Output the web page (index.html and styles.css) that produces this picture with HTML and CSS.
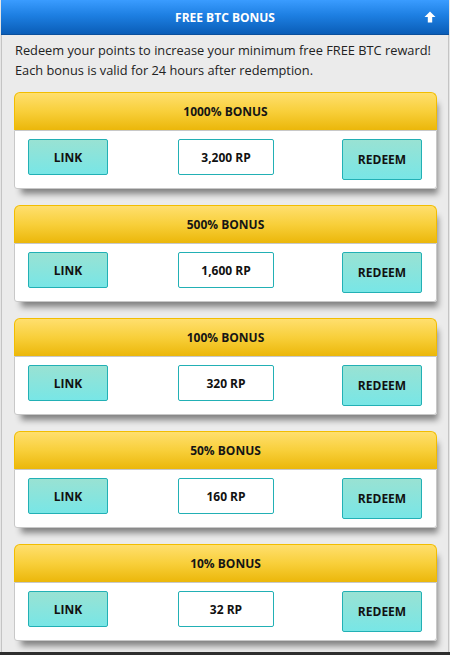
FILE: index.html
```html
<!DOCTYPE html>
<html>
<head>
<meta charset="utf-8">
<link rel="stylesheet" href="styles.css">
</head>
<body>
<div class="panel">
  <div class="panel-head">
    <span class="title">FREE BTC BONUS</span>
    <svg class="arrow" width="12" height="12" viewBox="0 0 12 12"><path d="M6 0.5 L11.5 6 L8.2 6 L8.2 11.5 L3.8 11.5 L3.8 6 L0.5 6 Z" fill="#fff"/></svg>
  </div>
  <div class="panel-body">
    <p class="intro">Redeem your points to increase your minimum free FREE BTC reward!<br>Each bonus is valid for 24 hours after redemption.</p>
    <div class="cards">
      <div class="card">
        <div class="card-head">1000% BONUS</div>
        <div class="card-body">
          <div class="btn">LINK</div>
          <div class="rp">3,200 RP</div>
          <div class="btn tall">REDEEM</div>
        </div>
      </div>
      <div class="card">
        <div class="card-head">500% BONUS</div>
        <div class="card-body">
          <div class="btn">LINK</div>
          <div class="rp">1,600 RP</div>
          <div class="btn tall">REDEEM</div>
        </div>
      </div>
      <div class="card">
        <div class="card-head">100% BONUS</div>
        <div class="card-body">
          <div class="btn">LINK</div>
          <div class="rp">320 RP</div>
          <div class="btn tall">REDEEM</div>
        </div>
      </div>
      <div class="card">
        <div class="card-head">50% BONUS</div>
        <div class="card-body">
          <div class="btn">LINK</div>
          <div class="rp">160 RP</div>
          <div class="btn tall">REDEEM</div>
        </div>
      </div>
      <div class="card">
        <div class="card-head">10% BONUS</div>
        <div class="card-body">
          <div class="btn">LINK</div>
          <div class="rp">32 RP</div>
          <div class="btn tall">REDEEM</div>
        </div>
      </div>
    </div>
  </div>
</div>
<div class="bottom-bar"></div>
</body>
</html>
```
FILE: styles.css
```css
html, body {
  margin: 0;
  padding: 0;
}
body {
  width: 450px;
  height: 655px;
  overflow: hidden;
  background: #e6e6e6;
  font-family: "Open Sans", "DejaVu Sans", sans-serif;
  display: flex;
  flex-direction: column;
}
.panel {
  width: 446px;
  height: 652px;
  margin-left: 1px;
  border-left: 1px solid #c4c4c4;
  border-right: 1px solid #c4c4c4;
  background: #ebebeb;
  display: flex;
  flex-direction: column;
  box-sizing: content-box;
}
.panel-head {
  height: 34px;
  margin: 0 -1px;
  background: linear-gradient(to bottom, #3a9cff 0%, #1d7fe2 45%, #0a5db7 100%);
  border-bottom: 1px solid #0a4f9c;
  display: flex;
  align-items: center;
  justify-content: center;
  position: relative;
}
.title {
  color: #fff;
  font-weight: 700;
  font-size: 12px;
}
.arrow {
  position: absolute;
  right: 13px;
  top: 11px;
}
.panel-body {
  padding: 5px 10px 0 12px;
  flex: 1;
}
.intro {
  margin: 0;
  font-size: 12.8px;
  line-height: 20px;
  color: #222;
  padding-left: 1px;
}
.cards {
  margin-top: 12px;
  display: flex;
  flex-direction: column;
  gap: 16px;
}
.card {
  width: 423px;
  border-radius: 6px 6px 3px 3px;
  box-shadow: 4px 8px 6px -3px rgba(0,0,0,0.45);
}
.card-head {
  height: 37px;
  border: 1px solid #f2bd00;
  border-bottom: none;
  border-radius: 6px 6px 0 0;
  background: linear-gradient(to bottom, #ffdf6e 0%, #f8cf3a 50%, #ebb70a 100%);
  display: flex;
  align-items: center;
  justify-content: center;
  font-weight: 700;
  font-size: 12px;
  color: #151515;
}
.card-body {
  background: #fff;
  border: 1px solid #c8c8c8;
  border-radius: 0 0 3px 3px;
  padding: 8px 14px 8px 13px;
  display: flex;
  justify-content: space-between;
  align-items: flex-start;
}
.btn {
  width: 78px;
  height: 34px;
  border: 1px solid #22b0b5;
  border-radius: 2px;
  background: linear-gradient(to bottom, #99e2d3 0%, #78e6e6 100%);
  display: flex;
  align-items: center;
  justify-content: center;
  font-weight: 700;
  font-size: 12px;
  color: #111;
}
.btn.tall {
  height: 39px;
}
.rp {
  width: 94px;
  height: 34px;
  border: 1px solid #22b0b5;
  border-radius: 2px;
  background: #fff;
  display: flex;
  align-items: center;
  justify-content: center;
  font-weight: 700;
  font-size: 12px;
  color: #111;
  margin-left: 2px;
}
.bottom-bar {
  height: 3px;
  background: #2e2e2e;
}
```
